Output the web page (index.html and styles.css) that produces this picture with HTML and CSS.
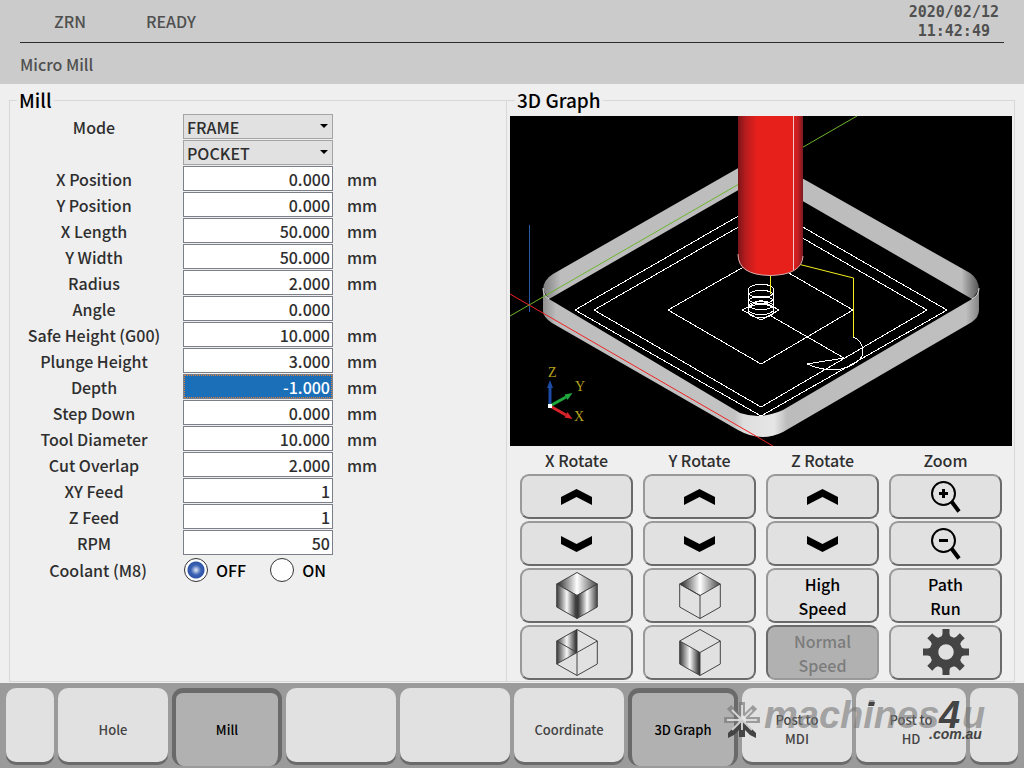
FILE: index.html
```html
<!DOCTYPE html>
<html lang="en">
<head>
<meta charset="utf-8">
<title>Micro Mill</title>
<link rel="stylesheet" href="styles.css">
</head>
<body>
<header class="header">
  <div class="status">
    <span class="status-mode">ZRN</span>
    <span class="status-state">READY</span>
    <time class="clock" datetime="2020-02-12T11:42:49">2020/02/12<br>11:42:49</time>
  </div>
  <h1 class="title">Micro Mill</h1>
</header>

<main class="main">
  <fieldset class="panel">
    <legend>Mill</legend>
    <form class="params">
      <div class="row"><label for="mode">Mode</label><span class="select"><select id="mode"><option>FRAME</option></select></span></div>
      <div class="row"><span></span><span class="select"><select aria-label="Mode type"><option>POCKET</option></select></span></div>
      <div class="row"><label for="xpos">X Position</label><input id="xpos" type="text" value="0.000"><span class="unit">mm</span></div>
      <div class="row"><label for="ypos">Y Position</label><input id="ypos" type="text" value="0.000"><span class="unit">mm</span></div>
      <div class="row"><label for="xlen">X Length</label><input id="xlen" type="text" value="50.000"><span class="unit">mm</span></div>
      <div class="row"><label for="ywid">Y Width</label><input id="ywid" type="text" value="50.000"><span class="unit">mm</span></div>
      <div class="row"><label for="radius">Radius</label><input id="radius" type="text" value="2.000"><span class="unit">mm</span></div>
      <div class="row"><label for="angle">Angle</label><input id="angle" type="text" value="0.000"></div>
      <div class="row"><label for="safe">Safe Height (G00)</label><input id="safe" type="text" value="10.000"><span class="unit">mm</span></div>
      <div class="row"><label for="plunge">Plunge Height</label><input id="plunge" type="text" value="3.000"><span class="unit">mm</span></div>
      <div class="row"><label for="depth">Depth</label><input id="depth" class="active" type="text" value="-1.000"><span class="unit">mm</span></div>
      <div class="row"><label for="step">Step Down</label><input id="step" type="text" value="0.000"><span class="unit">mm</span></div>
      <div class="row"><label for="tool">Tool Diameter</label><input id="tool" type="text" value="10.000"><span class="unit">mm</span></div>
      <div class="row"><label for="overlap">Cut Overlap</label><input id="overlap" type="text" value="2.000"><span class="unit">mm</span></div>
      <div class="row"><label for="xyfeed">XY Feed</label><input id="xyfeed" type="text" value="1"></div>
      <div class="row"><label for="zfeed">Z Feed</label><input id="zfeed" type="text" value="1"></div>
      <div class="row"><label for="rpm">RPM</label><input id="rpm" type="text" value="50"></div>
      <div class="row row-radio" role="radiogroup" aria-labelledby="coolant">
        <span id="coolant" class="name">Coolant (M8)</span>
        <span class="radios">
          <label class="radio"><input type="radio" name="coolant" checked>OFF</label>
          <label class="radio"><input type="radio" name="coolant">ON</label>
        </span>
      </div>
    </form>
  </fieldset>

  <fieldset class="panel panel-graph">
    <legend>3D Graph</legend>
    <svg class="scene" viewBox="510 116 502 330" role="img" aria-label="Tool path preview">
      <defs>
        <linearGradient id="cyl"><stop offset="0" stop-color="#7a1518"/><stop offset=".12" stop-color="#b81c1e"/><stop offset=".3" stop-color="#e8201b"/><stop offset=".82" stop-color="#e8201b"/><stop offset=".92" stop-color="#c61d20"/><stop offset="1" stop-color="#7a1a22"/></linearGradient>
        <linearGradient id="wallFront" gradientUnits="userSpaceOnUse" x1="543" y1="0" x2="979" y2="0"><stop offset="0" stop-color="#8f8f8f"/><stop offset=".03" stop-color="#bdbdbd"/><stop offset=".44" stop-color="#c3c3c3"/><stop offset=".46" stop-color="#dedede"/><stop offset=".53" stop-color="#e6e6e6"/><stop offset=".56" stop-color="#bcbcbc"/><stop offset=".97" stop-color="#bfbfbf"/><stop offset="1" stop-color="#858585"/></linearGradient>
        <linearGradient id="wallBack" gradientUnits="userSpaceOnUse" x1="543" y1="0" x2="979" y2="0"><stop offset="0" stop-color="#7d7d7d"/><stop offset=".04" stop-color="#bdbdbd"/><stop offset=".96" stop-color="#bdbdbd"/><stop offset="1" stop-color="#555"/></linearGradient>
      </defs>
      <rect x="510" y="116" width="502" height="330" fill="#000"/>
      <path fill="url(#wallBack)" d="M761 155 L553 274 Q543 280 543 290 L549 299 L761 177 L972 299 L979 290 Q979 279 970 273 Z"/>
      <path fill="url(#wallFront)" d="M543 288 V311 Q543 317 552 323 L738 430 Q761 443 783 432 L972 322 Q979 317 979 310 V288 Q979 295 972 299 L783 410 Q761 420 740 413 L549 299 Q543 294 543 288 Z"/>
      <path fill="none" stroke="#ddd" d="M543 288 Q543 295 549 299 M979 288 Q979 295 972 299"/>
      <g fill="none" stroke="#fff" shape-rendering="crispEdges">
        <path d="M575 310 L761 203 L947 310 L761 416 Z"/>
        <path d="M594 310 L761 214 L927 310 L761 407 Z"/>
        <path d="M668 310 L761 257 L853 310 L761 364 Z"/>
        <path d="M742 310 L761 300 L779 310 L761 320 Z"/>
        <path d="M771 316 L844 358 L807 364 Q830 374 848 367 Q864 360 863 350 Q862 340 853 337"/>
        <ellipse cx="761" cy="291" rx="13" ry="7"/>
        <ellipse cx="761" cy="297" rx="13" ry="7"/>
        <ellipse cx="761" cy="303" rx="13" ry="7"/>
        <ellipse cx="761" cy="308" rx="13" ry="7"/>
        <ellipse cx="761" cy="311" rx="13" ry="7"/>
      </g>
      <path d="M529.500 225 V312" stroke="#2458a5"/>
      <path d="M510 316 L857 116" stroke="#6cb52d"/>
      <path d="M510 294 L773 446" stroke="#ee2222"/>
      <path d="M770.500 274 V294 M798 264 L853.500 278 V337" fill="none" stroke="#f5ee1f"/>
      <path fill="url(#cyl)" d="M738 116 H803 V258 Q800 275 770 275.500 Q740 275 738 258 Z"/>
      <path fill="none" stroke="#d9a9a9" d="M738 254 Q738 275 770 275.500 Q802 275 803 256"/>
      <path stroke="#eccaca" d="M793.500 116 V270"/>
      <g stroke-width="3">
        <path d="M550 406 V387" stroke="#1c4aa5"/><path d="M550 406 L566 397" stroke="#1fa83c"/><path d="M550 406 L566 415" stroke="#d8232a"/>
      </g>
      <path fill="#1c4aa5" d="M550 380 L553 388 H547 Z"/>
      <path fill="#1fa83c" d="M572.500 393 L567.500 400 L564.500 394.500 Z"/>
      <path fill="#d8232a" d="M572.500 419 L567.500 412 L564.500 417.500 Z"/>
      <rect x="548" y="404" width="4" height="4" fill="#fff"/>
      <g class="axis"><text x="548" y="377">Z</text><text x="575" y="391">Y</text><text x="574" y="421">X</text></g>
    </svg>

    <svg class="defs" aria-hidden="true">
      <defs>
        <linearGradient id="side"><stop offset="0" stop-color="#3a3a3a"/><stop offset=".5" stop-color="#f6f6f6"/><stop offset="1" stop-color="#222"/></linearGradient>
        <linearGradient id="side2"><stop offset="0" stop-color="#222"/><stop offset=".5" stop-color="#fafafa"/><stop offset="1" stop-color="#444"/></linearGradient>
        <linearGradient id="lid"><stop offset="0" stop-color="#222"/><stop offset=".5" stop-color="#fff"/><stop offset="1" stop-color="#444"/></linearGradient>
        <symbol id="up" viewBox="0 0 31 16"><path d="M0 8 L15.500 0 L31 8 V16 L15.500 8 L0 16 Z"/></symbol>
        <symbol id="down" viewBox="0 0 31 16"><path d="M0 8 L15.500 16 L31 8 V0 L15.500 8 L0 0 Z"/></symbol>
      </defs>
    </svg>
    <div class="controls">
      <span class="caption">X Rotate</span><span class="caption">Y Rotate</span><span class="caption">Z Rotate</span><span class="caption">Zoom</span>

      <button type="button" class="key" aria-label="X rotate up"><svg width="31" height="16"><use href="#up"/></svg></button>
      <button type="button" class="key" aria-label="Y rotate up"><svg width="31" height="16"><use href="#up"/></svg></button>
      <button type="button" class="key" aria-label="Z rotate up"><svg width="31" height="16"><use href="#up"/></svg></button>
      <button type="button" class="key" aria-label="Zoom in"><svg width="30" height="32" viewBox="0 0 30 32"><circle cx="12.500" cy="12.500" r="11.500" fill="none" stroke="#000" stroke-width="2"/><path d="M8 12.500 H17 M12.500 8 V17" stroke="#000" stroke-width="3"/><path d="M20.500 20.500 L28 30.500" stroke="#000" stroke-width="4"/></svg></button>

      <button type="button" class="key" aria-label="X rotate down"><svg width="31" height="16"><use href="#down"/></svg></button>
      <button type="button" class="key" aria-label="Y rotate down"><svg width="31" height="16"><use href="#down"/></svg></button>
      <button type="button" class="key" aria-label="Z rotate down"><svg width="31" height="16"><use href="#down"/></svg></button>
      <button type="button" class="key" aria-label="Zoom out"><svg width="30" height="32" viewBox="0 0 30 32"><circle cx="12.500" cy="12.500" r="11.500" fill="none" stroke="#000" stroke-width="2"/><path d="M8 12.500 H17" stroke="#000" stroke-width="3"/><path d="M20.500 20.500 L28 30.500" stroke="#000" stroke-width="4"/></svg></button>

      <button type="button" class="key" aria-label="Isometric view"><svg class="cube" viewBox="0 0 42 47"><path fill="url(#lid)" d="M21 .5 L41.300 12 L21 23.500 L.7 12 Z"/><path fill="url(#side)" d="M.7 12 L21 23.500 V46.500 L.7 35 Z"/><path fill="url(#side2)" d="M21 23.500 L41.300 12 V35 L21 46.500 Z"/></svg></button>
      <button type="button" class="key" aria-label="Top view"><svg class="cube" viewBox="0 0 42 47"><path fill="url(#lid)" d="M21 .5 L41.300 12 L21 23.500 L.7 12 Z"/><path fill="none" d="M.7 12 L21 23.500 V46.500 L.7 35 Z M21 46.500 L41.300 35 V12"/></svg></button>
      <button type="button" class="key">High<br>Speed</button>
      <button type="button" class="key">Path<br>Run</button>

      <button type="button" class="key" aria-label="Side view"><svg class="cube" viewBox="0 0 42 47"><path fill="url(#side)" d="M21 .5 L.7 12 V35 L21 23.500 Z"/><path fill="none" d="M21 .5 L41.300 12 V35 L21 46.500 L.7 35 M.7 12 L21 23.500 L41.300 12 M21 23.500 V46.500"/></svg></button>
      <button type="button" class="key" aria-label="Front view"><svg class="cube" viewBox="0 0 42 47"><path fill="url(#side)" d="M.7 12 L21 23.500 V46.500 L.7 35 Z"/><path fill="none" d="M.7 12 L21 .5 L41.300 12 V35 L21 46.500 M21 23.500 L41.300 12"/></svg></button>
      <button type="button" class="key" disabled>Normal<br>Speed</button>
      <button type="button" class="key" aria-label="Settings"><svg width="46" height="48" viewBox="-23 -23 46 48"><g fill="#444"><path id="tooth" d="M-3.500 -23 H3.500 V-18 L5 -14 H-5 L-3.500 -18 Z"/><use href="#tooth" transform="rotate(45)"/><use href="#tooth" transform="rotate(90)"/><use href="#tooth" transform="rotate(135)"/><use href="#tooth" transform="rotate(180)"/><use href="#tooth" transform="rotate(225)"/><use href="#tooth" transform="rotate(270)"/><use href="#tooth" transform="rotate(315)"/></g><circle r="12" fill="none" stroke="#444" stroke-width="8.500"/></svg></button>
    </div>
  </fieldset>
</main>

<nav class="softkeys" aria-label="Soft keys">
  <button type="button" class="soft" aria-label="Previous"></button>
  <button type="button" class="soft">Hole</button>
  <button type="button" class="soft pressed">Mill</button>
  <button type="button" class="soft" aria-label="Empty"></button>
  <button type="button" class="soft" aria-label="Empty"></button>
  <button type="button" class="soft">Coordinate</button>
  <button type="button" class="soft pressed">3D Graph</button>
  <button type="button" class="soft">Post to<br>MDI</button>
  <button type="button" class="soft">Post to<br>HD</button>
  <button type="button" class="soft" aria-label="Next"></button>
  <svg class="watermark" width="268" height="48" viewBox="722 698 268 48">
    <path fill="none" stroke="#777" stroke-opacity=".65" stroke-width="6" d="M742 702 V715 M724 720 H738 M746 720 H760 M729 707 L739 717 M755 707 L745 717"/>
    <path fill="#444" d="M742 719 L756 733 V738 L750 735 L745 730 V737 H739 V730 L734 735 L728 738 V733 Z"/>
    <path fill="none" stroke="#e4e4e4" stroke-opacity=".85" stroke-width="2" d="M742 705 V730 M727 720 H757 M732 710 L752 730 M752 710 L732 730"/>
    <g class="brand"><text class="pale" x="764" y="728">machines</text><text class="dark" x="939" y="728">4</text><text class="pale" x="962" y="728">u</text></g>
    <path fill="#444" d="M869 702 H875 L874 706 H868 Z"/>
    <text class="domain" x="929" y="739">.com.au</text>
  </svg>
</nav>
</body>
</html>
```
FILE: styles.css
```css
* { box-sizing: border-box; }

body {
  margin: 0;
  min-height: 100vh;
  display: flex;
  flex-direction: column;
  background: #efefef;
  color: #2e2e2e;
  font: 500 16px/24px "Noto Sans CJK SC", "Noto Sans", sans-serif;
}

button, input, select { font: inherit; color: inherit; margin: 0; }

.header {
  padding: 0 20px;
  background: #cbcbcb;
  color: #505050;
}
.status {
  display: flex;
  align-items: center;
  height: 43px;
  border-bottom: 1px solid #2c2c2c;
  padding: 0 5px 0 34px;
}
.status-mode { width: 92px; }
.clock {
  margin-left: auto;
  padding-top: 2px;
  text-align: center;
  font: bold 15px/19px "DejaVu Sans Mono", monospace;
}
.title { margin: 0; padding: 9px 0 8px; font: inherit; }

.main {
  flex: 1;
  display: grid;
  grid-template-columns: 498fr 508fr;
  padding: 4px 9px 1px;
}
.panel {
  min-width: 0;
  margin: 0;
  padding: 2px 0 0;
  border: 1px solid #d8d8d8;
}
.panel legend {
  margin-left: 7px;
  padding: 0 2px;
  font-size: 19px;
  line-height: 24px;
  color: #000;
}
.panel-graph { border-left: 0; padding: 4px 2px 0 3px; }
.panel-graph legend { margin-left: 5px; }

.params { display: grid; gap: 1px; }
.row {
  display: grid;
  grid-template-columns: 168px 150px 50px;
  column-gap: 5px;
  height: 25px;
  align-items: stretch;
}
.row > label, .name { text-align: center; line-height: 27px; }
.row input[type="text"], .row select {
  width: 100%;
  height: 25px;
  border: 1px solid #7b7f8a;
  border-radius: 0;
  background: #fff;
  padding: 0 2px;
  line-height: 20px;
  text-align: right;
}
.row input.active {
  background: #1b6fb9;
  color: #fff;
  outline: 1px dotted #e0813a;
  outline-offset: -2px;
}
.select { position: relative; }
.row select {
  appearance: none;
  background: #e1e1e1;
  border-color: #a4a4a4;
  text-align: left;
  padding: 0 3px;
}
.select::after {
  content: "";
  position: absolute;
  right: 5px;
  top: 10px;
  border: 4px solid transparent;
  border-top-color: #000;
  border-bottom: 0;
}
.unit { padding-left: 9px; line-height: 27px; }
.row-radio { height: 28px; }
.name { padding-left: 8px; line-height: 28px; }
.radios { display: flex; gap: 24px; align-items: center; padding-left: 1px; color: #000; }
.radio { display: flex; align-items: center; gap: 8px; }
.radio input {
  appearance: none;
  width: 24px;
  height: 24px;
  border: 1px solid #333;
  border-radius: 50%;
  background: #fff;
}
.radio input:checked { background: radial-gradient(circle, #e6ebf6 0, #3b62b4 5px, #2f55a6 8px, #fff 9px); }

.scene { display: block; width: 100%; height: auto; }
.defs { position: absolute; width: 0; height: 0; }
.axis { font: 14px "Liberation Serif", serif; fill: #b5a11f; }

.controls {
  display: grid;
  grid-template-columns: repeat(4, 1fr);
  grid-template-rows: 26px 45px 45px 55px 55px;
  gap: 2px 10px;
  padding: 0 10px;
}
.caption { text-align: center; line-height: 29px; }
.key {
  display: flex;
  align-items: center;
  justify-content: center;
  padding: 0;
  border: 2px solid;
  border-color: #999 #6a6a6a #6a6a6a #999;
  border-radius: 9px;
  background: #e1e1e1;
  color: #000;
}
.key:disabled {
  background: #b1b1b1;
  color: #7c7c7c;
  border-color: #6a6a6a #999 #999 #6a6a6a;
}
.cube { width: 42px; height: 47px; stroke: #444; }

.softkeys {
  position: relative;
  display: grid;
  grid-template-columns: 48fr repeat(8, 110fr) 48fr;
  gap: 4px;
  height: 85px;
  padding: 5px 6px 6px;
  background: #9b9b9b;
  font-size: 13px;
  line-height: 19px;
}
.soft {
  min-width: 0;
  height: 74px;
  padding: 8px 0 0;
  border: 0;
  border-radius: 10px;
  background: #e1e1e1;
  color: #444;
  box-shadow: 0 3px 0 #6a6a6a;
}
.soft.pressed {
  height: 78px;
  padding: 0;
  border: 4px solid #6a6a6a;
  border-top-width: 5px;
  border-bottom: 0;
  border-radius: 11px;
  background: #b1b1b1;
  color: #000;
  box-shadow: none;
}
.watermark {
  position: absolute;
  right: 34px;
  top: 15px;
  pointer-events: none;
}
.brand { font: italic bold 38px "Liberation Sans", sans-serif; }
.pale { fill: #777; fill-opacity: .6; }
.dark, .domain { fill: #444; }
.domain { font: italic bold 14px "Liberation Sans", sans-serif; }
```
